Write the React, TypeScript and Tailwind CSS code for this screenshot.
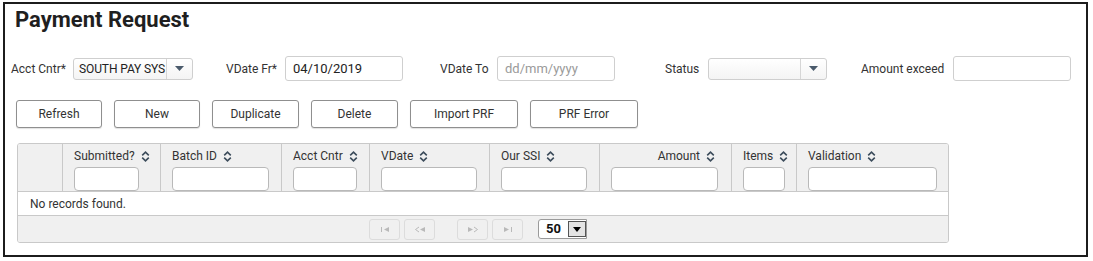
import React from "react";

const font = { fontFamily: "Roboto, 'Liberation Sans', sans-serif" };

function SortIcon() {
  return (
    <svg width="9" height="11" viewBox="0 0 9 11" className="ml-[6px] shrink-0">
      <path d="M1.2 4.3 L4.5 1.2 L7.8 4.3" fill="none" stroke="#3d4d5c" strokeWidth="1.6" />
      <path d="M1.2 6.7 L4.5 9.8 L7.8 6.7" fill="none" stroke="#3d4d5c" strokeWidth="1.6" />
    </svg>
  );
}

function Caret() {
  return (
    <svg width="9" height="5" viewBox="0 0 9 5">
      <path d="M0 0 L9 0 L4.5 5 Z" fill="#4a5a6b" />
    </svg>
  );
}

function SelectBox({ value, width }: { value: string; width: string }) {
  return (
    <div className={`${width} h-[22px] flex border border-[#cfcfcf] rounded-[3px] bg-gradient-to-b from-white to-[#f4f4f4]`}>
      <div className="flex-1 min-w-0 flex items-center pl-[5px] text-[12px] tracking-[-0.1px] text-[#222] whitespace-nowrap">{value}</div>
      <div className="w-[26px] shrink-0 border-l border-[#d6d6d6] flex items-center justify-center">
        <Caret />
      </div>
    </div>
  );
}

function TextBox({ value, placeholder, width }: { value?: string; placeholder?: string; width: string }) {
  return (
    <div className={`${width} h-[25px] border border-[#cfcfcf] rounded-[3px] bg-white flex items-center pl-[7px] text-[13px]`}>
      {value ? <span className="text-[#222]">{value}</span> : <span className="text-[#9a9a9a]">{placeholder}</span>}
    </div>
  );
}

function Btn({ label, width }: { label: string; width: string }) {
  return (
    <div className={`${width} h-[28px] border border-[#8f8f8f] rounded-[3px] bg-white flex items-center justify-center text-[12px] text-[#333] shadow-[0_1px_1px_rgba(0,0,0,0.12)]`}>
      {label}
    </div>
  );
}

type Col = { label: string; w: string; input: string; right?: boolean };

const cols: Col[] = [
  { label: "Submitted?", w: "w-[98px]", input: "w-[65px]" },
  { label: "Batch ID", w: "w-[121px]", input: "w-[97px]" },
  { label: "Acct Cntr", w: "w-[88px]", input: "w-[64px]" },
  { label: "VDate", w: "w-[120px]", input: "w-[96px]" },
  { label: "Our SSI", w: "w-[110px]", input: "w-[86px]" },
  { label: "Amount", w: "w-[132px]", input: "w-[107px]", right: true },
  { label: "Items", w: "w-[65px]", input: "w-[42px]" },
  { label: "Validation", w: "w-[152px]", input: "w-[129px]" },
];

function PageBtn({ kind }: { kind: "first" | "prev" | "next" | "last" }) {
  const c = "#b9b9b9";
  return (
    <div className="w-[31px] h-[21px] border border-[#dcdcdc] rounded-[3px] flex items-center justify-center">
      <svg width="12" height="7" viewBox="0 0 12 7">
        {kind === "first" && (
          <>
            <rect x="2" y="1" width="1" height="5" fill={c} />
            <path d="M10 1 L5 3.5 L10 6 Z" fill={c} />
          </>
        )}
        {kind === "prev" && (
          <>
            <path d="M5 1 L1.5 3.5 L5 6" fill="none" stroke={c} strokeWidth="1" />
            <path d="M11 1 L6 3.5 L11 6 Z" fill={c} />
          </>
        )}
        {kind === "next" && (
          <>
            <path d="M1 1 L6 3.5 L1 6 Z" fill={c} />
            <path d="M7 1 L10.5 3.5 L7 6" fill="none" stroke={c} strokeWidth="1" />
          </>
        )}
        {kind === "last" && (
          <>
            <path d="M2 1 L7 3.5 L2 6 Z" fill={c} />
            <rect x="9" y="1" width="1" height="5" fill={c} />
          </>
        )}
      </svg>
    </div>
  );
}

export default function App() {
  return (
    <div className="w-[1093px] h-[261px] bg-white pt-[2px] pl-[3px]" style={font}>
      <div className="w-[1085px] h-[255px] border-2 border-[#1c1c1c] flex flex-col">
        <div className="mt-[3px] pl-[10px] h-[25px] leading-[25px] text-[22px] font-bold text-[#1f1f1f]">Payment Request</div>

        <div className="mt-[24px] ml-[6px] flex items-center h-[25px] text-[12px] text-[#333]">
          <span className="w-[62px]">Acct Cntr*</span>
          <SelectBox value="SOUTH PAY SYS" width="w-[120px]" />
          <span className="ml-[33px] w-[59px]">VDate Fr*</span>
          <TextBox value="04/10/2019" width="w-[118px]" />
          <span className="ml-[37px] w-[57px]">VDate To</span>
          <TextBox placeholder="dd/mm/yyyy" width="w-[118px]" />
          <span className="ml-[50px] w-[43px]">Status</span>
          <SelectBox value="" width="w-[119px]" />
          <span className="ml-[34px] w-[92px]">Amount exceed</span>
          <TextBox width="w-[118px]" />
        </div>

        <div className="mt-[19px] ml-[11px] flex gap-[12px]">
          <Btn label="Refresh" width="w-[86px]" />
          <Btn label="New" width="w-[86px]" />
          <Btn label="Duplicate" width="w-[87px]" />
          <Btn label="Delete" width="w-[87px]" />
          <Btn label="Import PRF" width="w-[108px]" />
          <Btn label="PRF Error" width="w-[108px]" />
        </div>

        <div className="mt-[15px] ml-[12px] w-[932px] border border-[#c9c9c9] rounded-[3px] overflow-hidden text-[12px] text-[#333]">
          <div className="flex h-[48px] bg-[#f0f0f0] border-b border-[#c9c9c9]">
            <div className="w-[44px]" />
            {cols.map((c) => (
              <div key={c.label} className={`${c.w} border-l border-[#c9c9c9] pl-[11px] pt-[5px] flex flex-col`}>
                <div className={`h-[14px] leading-[14px] flex items-center ${c.right ? `${c.input} justify-end pr-[3px]` : ""}`}>
                  <span>{c.label}</span>
                  <SortIcon />
                </div>
                <div className={`${c.input} h-[25px] mt-[4px] border border-[#b9b9b9] rounded-[4px] bg-white`} />
              </div>
            ))}
          </div>
          <div className="h-[24px] bg-white border-b border-[#c9c9c9] flex items-center pl-[12px]">No records found.</div>
          <div className="h-[26px] bg-[#f0f0f0] flex items-center pl-[351px]">
            <PageBtn kind="first" />
            <div className="ml-[4px]"><PageBtn kind="prev" /></div>
            <div className="ml-[22px]"><PageBtn kind="next" /></div>
            <div className="ml-[4px]"><PageBtn kind="last" /></div>
            <div className="ml-[15px] w-[49px] h-[20px] border border-[#9a9a9a] rounded-l-[3px] bg-white flex items-center">
              <span className="pl-[7px] w-[29px] text-[13px] font-bold text-[#111]">50</span>
              <div className="w-[18px] h-[16px] border border-[#555] bg-[#e4e4e4] flex items-center justify-center">
                <svg width="8" height="5" viewBox="0 0 8 5"><path d="M0 0 L8 0 L4 5 Z" fill="#000" /></svg>
              </div>
            </div>
          </div>
        </div>
      </div>
    </div>
  );
}
